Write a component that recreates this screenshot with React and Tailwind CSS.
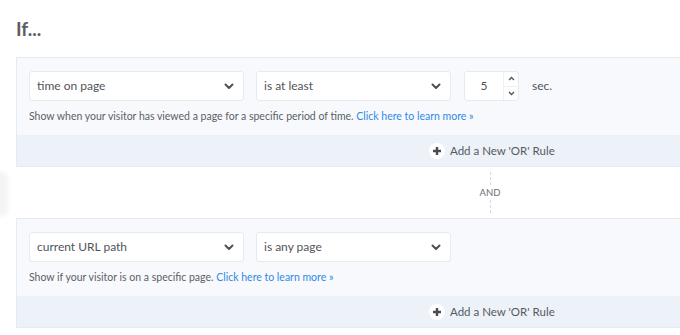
import React from "react";

const font = { fontFamily: "Lato, 'Open Sans', sans-serif" };

function Chevron() {
  return (
    <svg width="10" height="7" viewBox="0 0 10 7" className="shrink-0">
      <path d="M1.5 1.5 L5 5 L8.5 1.5" fill="none" stroke="#4b5059" strokeWidth="2" strokeLinecap="round" strokeLinejoin="round" />
    </svg>
  );
}

function Select({ label, w }) {
  return (
    <div className={`${w} h-[30px] bg-white border border-[#e6eaf1] rounded-[3px] flex items-center justify-between pl-[7px] pr-[9px]`}>
      <span className="text-[12px] text-[#50545c]">{label}</span>
      <Chevron />
    </div>
  );
}

function OrBar() {
  return (
    <div className="h-[31px] bg-[#edf1f8] flex items-center justify-start pl-[412px]">
      <div className="flex items-center gap-[5px]">
        <div className="w-[16px] h-[16px] rounded-full bg-white flex items-center justify-center">
          <svg width="10" height="10" viewBox="0 0 10 10">
            <path d="M5 1 V9 M1 5 H9" stroke="#474b53" strokeWidth="2.4" />
          </svg>
        </div>
        <span className="text-[11.5px] text-[#555a62]">Add a New 'OR' Rule</span>
      </div>
    </div>
  );
}

export default function App() {
  return (
    <div className="w-[680px] h-[335px] bg-white overflow-hidden relative" style={font}>
      <div className="absolute left-[-6px] top-[172px] w-[14px] h-[44px] rounded-full bg-[#f3f4f6] blur-[2px]" />
      <div className="pl-[16px] pt-[18px]">
        <h1 className="text-[19px] font-bold text-[#5b5e63] leading-[22px] h-[39px]">If...</h1>
        <div className="border border-r-0 border-[#e6eaf2] bg-[#f8f9fd]">
          <div className="pt-[13px] pl-[12px] pb-[12px]">
            <div className="flex items-center gap-[12px]">
              <Select label="time on page" w="w-[215px]" />
              <Select label="is at least" w="w-[195px]" />
              <div className="ml-[1px] w-[55px] h-[30px] bg-white border border-[#e6eaf1] rounded-[3px] flex">
                <div className="flex-1 flex items-center justify-center text-[12px] text-[#50545c]">5</div>
                <div className="w-[15px] flex flex-col border-l border-[#eef1f6]">
                  <div className="flex-1 flex items-center justify-center border-b border-[#eef1f6]">
                    <svg width="7" height="5" viewBox="0 0 7 5"><path d="M1 4 L3.5 1.5 L6 4" fill="none" stroke="#50545c" strokeWidth="1.3" /></svg>
                  </div>
                  <div className="flex-1 flex items-center justify-center">
                    <svg width="7" height="5" viewBox="0 0 7 5"><path d="M1 1 L3.5 3.5 L6 1" fill="none" stroke="#50545c" strokeWidth="1.3" /></svg>
                  </div>
                </div>
              </div>
              <span className="ml-[1px] text-[12px] text-[#50545c]">sec.</span>
            </div>
            <p className="mt-[8px] text-[10.5px] leading-[14px] text-[#5b5f66]">
              Show when your visitor has viewed a page for a specific period of time.{" "}
              <span className="text-[#2f8ae4]">Click here to learn more »</span>
            </p>
          </div>
          <OrBar />
        </div>
        <div className="h-[51px] flex items-center justify-start pl-[459px]">
          <div className="w-[30px] flex flex-col items-center">
            <div className="h-[13px] border-l border-dashed border-[#d5dae2]" />
            <span className="text-[9.5px] text-[#6a6e75] leading-[13px] my-[1px]">AND</span>
            <div className="h-[13px] border-l border-dashed border-[#d5dae2]" />
          </div>
        </div>
        <div className="border border-r-0 border-[#e6eaf2] bg-[#f8f9fd]">
          <div className="pt-[13px] pl-[12px] pb-[12px]">
            <div className="flex items-center gap-[12px]">
              <Select label="current URL path" w="w-[215px]" />
              <Select label="is any page" w="w-[195px]" />
            </div>
            <p className="mt-[8px] text-[10.5px] leading-[14px] text-[#5b5f66]">
              Show if your visitor is on a specific page.{" "}
              <span className="text-[#2f8ae4]">Click here to learn more »</span>
            </p>
          </div>
          <OrBar />
        </div>
      </div>
    </div>
  );
}
